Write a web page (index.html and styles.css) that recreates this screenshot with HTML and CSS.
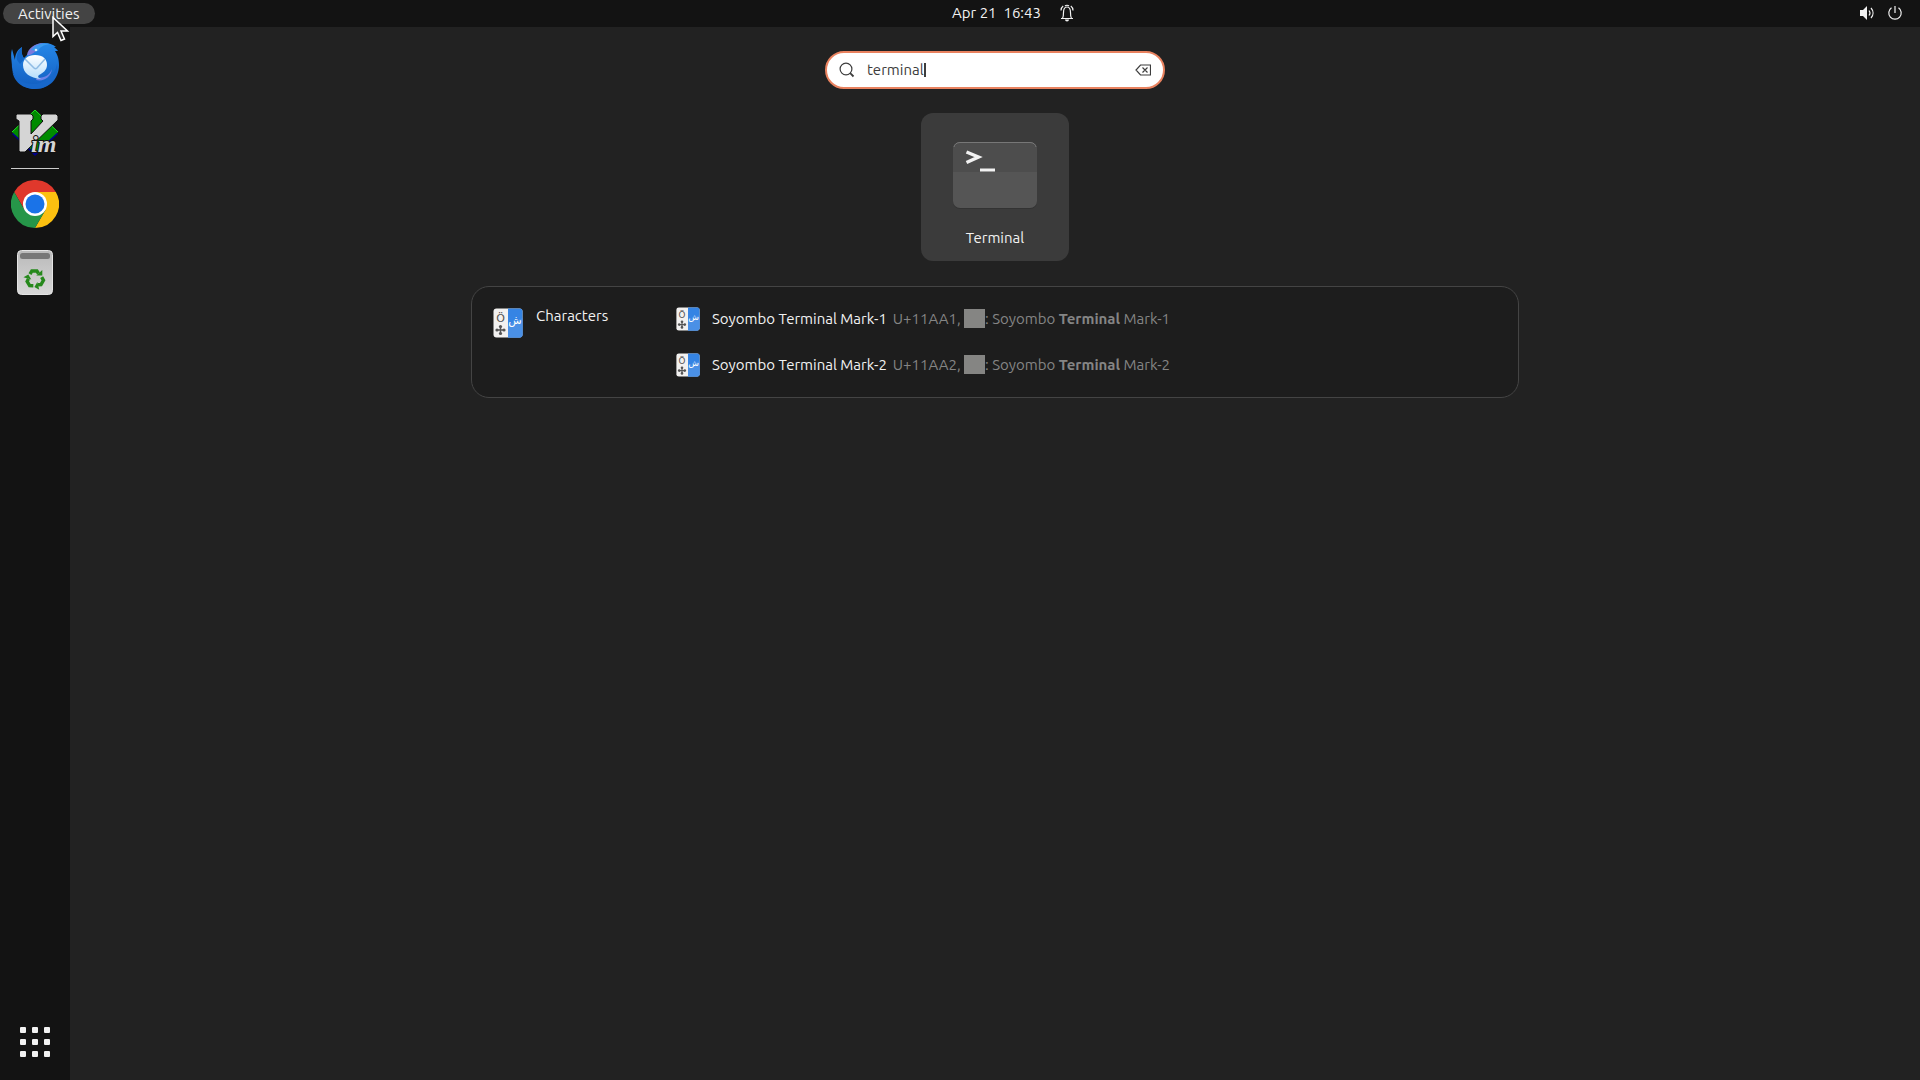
FILE: index.html
```html
<!DOCTYPE html>
<html lang="en">
<head>
  <meta charset="UTF-8">
  <meta name="viewport" content="width=device-width, initial-scale=1.0">
  <title>Activities</title>
  <link rel="stylesheet" href="styles.css">
</head>
<body>
  <header class="topbar">
    <button class="activities">Activities</button>
    <button class="clock">
      <span>Apr 21&nbsp; 16:43</span>
      <svg width="14" height="18" viewBox="0 0 14 18" fill="none" stroke="#f2f2f2" stroke-width="1.200">
        <path d="M1 14.500h12M2.500 14.500c1-1.500 1-3 1-6C3.500 5 4.500 3 7 3s3.500 2 3.500 5.500c0 3 0 4.500 1 6"/>
        <path d="M1 6.500c0-2 .8-3.500 2.200-4.500M13 6.500c0-2-.8-3.500-2.200-4.500M5 2c1-1 3-1 4 0"/>
        <path d="M5 15.500h4a2 2 0 0 1-4 0z" fill="#f2f2f2" stroke="none"/>
      </svg>
    </button>
    <button class="status" aria-label="System menu">
      <svg width="16" height="16" viewBox="0 0 16 16">
        <path d="M1 5h3l4-4v14l-4-4H1z" fill="#f2f2f2"/>
        <path d="M10 5.500c1.200 1.500 1.200 3.500 0 5M12 3c2.700 3 2.700 7 0 10" fill="none" stroke="#f2f2f2" stroke-width="1.200"/>
      </svg>
      <svg width="16" height="16" viewBox="0 0 16 16" fill="none" stroke="#f2f2f2" stroke-width="1.200">
        <path d="M4.500 2.800a6.200 6.200 0 1 0 7 0M8 1v7"/>
      </svg>
    </button>
  </header>

  <div class="desktop">
    <nav class="dock">
      <button class="app" aria-label="Thunderbird">
        <svg width="48" height="48" viewBox="0 0 48 48">
          <defs>
            <linearGradient id="bird" x1="0" y1="0" x2="0" y2="1"><stop offset="0" stop-color="#2587e8"/><stop offset="1" stop-color="#125ec0"/></linearGradient>
            <linearGradient id="mail" x1="0" y1="0" x2="0" y2="1"><stop offset="0" stop-color="#fff"/><stop offset="1" stop-color="#b5ddfb"/></linearGradient>
          </defs>
          <path d="M11 5C6 8 4 13 4 18L1 7c-2 7 0 12 0 18 1 12 10 22 23 22 15 0 24-11 24-24 0-7-2-11-4-14h3c-1-2-3-3-4-4h2C39 0 26-1 20 7l-4 6-3 3c-2-3-3-6-2-11z" fill="url(#bird)"/>
          <path d="M1 22v7c4 8 11 13 21 13 12 0 22-8 24-20 2 14-8 25-22 25C10 47 0 38 1 22z" fill="#1767ca"/>
          <path d="M11 5c-4 3-6 8-5 13l3 4 4-5c-2-3-3-7-2-12z" fill="#1265c6"/>
          <path d="M16 13c1-7 8-12 17-12-5 1-8 3-10 6l5 1c-5 1-7 6-12 5z" fill="#7c79dc"/>
          <path d="M20 8l4-4c4-2 9-3 15-2-7 1-10 3-12 7z" fill="#3b9bef"/>
          <circle cx="25" cy="8" r="1.300" fill="#d7edff"/>
          <path d="M26 36c9 0 13-4 15-9-1 8-8 13-16 11z" fill="#6d83e7"/>
          <path d="M24 13c8 0 12 4 12 10 0 5-4 8-8 10-2 2 0 3 2 4-11-1-18-6-18-14 0-6 5-10 12-10z" fill="url(#mail)"/>
          <path d="M14 17l9 9c1 1 2 1 3 0l8-9" fill="none" stroke="#90bce4" stroke-width="1.500"/>
        </svg>
      </button>
      <button class="app" aria-label="Vim">
        <svg width="48" height="48" viewBox="0 0 48 48">
          <path d="M24 2l23 22-23 22L1 24z" fill="#00008b"/>
          <path d="M24 0l23 22-23 21L1 22z" fill="#008b00"/>
          <path d="M1 22L24 0l23 22" fill="none" stroke="#20e020"/>
          <path d="M6 4h14l2 2v3l-2 2v13L32 11l-2-2V6l2-2h13l2 2v4L14 42H9l-1-1V11L5 9V5z" fill="#d5d5d5" stroke="#111" stroke-width="1"/>
          <text class="vim-text" x="20" y="42">im</text>
        </svg>
      </button>
      <hr>
      <button class="app" aria-label="Google Chrome">
        <svg width="48" height="48" viewBox="0 0 48 48">
          <path d="M24 24L13.600 30 3.200 12a24 24 0 0 1 41.600 0H24z" fill="#e0382c"/>
          <path d="M24 24V12h20.800A24 24 0 0 1 24 48l10.400-18z" fill="#fcc010"/>
          <path d="M24 24l10.400 6L24 48A24 24 0 0 1 3.200 12l10.400 18z" fill="#269649"/>
          <circle cx="24" cy="24" r="12" fill="#fff"/>
          <circle cx="24" cy="24" r="9.500" fill="#1a73e8"/>
        </svg>
      </button>
      <button class="app" aria-label="Trash">
        <svg width="48" height="48" viewBox="0 0 48 48">
          <defs><linearGradient id="bin" x1="0" y1="0" x2="0" y2="1"><stop offset="0" stop-color="#b9b9b9"/><stop offset="1" stop-color="#d8d8d8"/></linearGradient></defs>
          <rect x="6.500" y="2.500" width="35" height="44" rx="4" fill="url(#bin)" stroke="#e4e4e4"/>
          <rect x="9" y="5" width="30" height="6" rx="2.500" fill="#777"/>
          <g fill="none" stroke="#26891c" stroke-width="3.400">
            <g id="arrow"><path d="M19 26.200l1.900-3.200h5l1.600 2.500"/><path d="M25.300 27.500h6v-5.600z" fill="#26891c" stroke="none"/></g>
            <use href="#arrow" transform="rotate(120 24 31)"/>
            <use href="#arrow" transform="rotate(240 24 31)"/>
          </g>
        </svg>
      </button>
      <button class="app show-apps" aria-label="Show Applications">
        <svg width="30" height="30" viewBox="0 0 30 30" fill="#f2f2f2">
          <g id="dots"><rect width="6" height="6" rx="1"/><rect x="12" width="6" height="6" rx="1"/><rect x="24" width="6" height="6" rx="1"/></g>
          <use href="#dots" y="12"/>
          <use href="#dots" y="24"/>
        </svg>
      </button>
    </nav>

    <main class="overview">
      <label class="search">
        <svg width="16" height="16" viewBox="0 0 16 16" fill="none" stroke="#3d3d3d" stroke-width="1.200"><circle cx="7" cy="7" r="5.900"/><path d="M11.200 11.200l3.300 3.300" stroke-width="1.800"/></svg>
        <input class="search-text" type="text" value="terminal" aria-label="Search">
        <span class="caret"></span>
        <button class="clear" aria-label="Clear">
          <svg width="16" height="12" viewBox="0 0 16 12" fill="none" stroke="#3d3d3d" stroke-width="1.200"><path d="M5.500 1h10v10h-10L1 6zM7.500 3.500l5 5M12.500 3.500l-5 5"/></svg>
        </button>
      </label>

      <button class="result-app">
        <svg width="96" height="96" viewBox="0 0 96 96">
          <rect x="6" y="16" width="84" height="66" rx="7" fill="#333"/>
          <rect x="6" y="15" width="84" height="66" rx="7" fill="#555"/>
          <path d="M6 45V22a7 7 0 0 1 7-7h70a7 7 0 0 1 7 7v23z" fill="#4d4d4d"/>
          <path d="M7 20a6 5 0 0 1 6-4.500h70a6 5 0 0 1 6 4.500" fill="none" stroke="#777"/>
          <path d="M19.500 25l12 5-12 5.500" fill="none" stroke="#f2f2f2" stroke-width="3.400"/>
          <path d="M33 43h15" stroke="#f2f2f2" stroke-width="3"/>
        </svg>
        <span>Terminal</span>
      </button>

      <section class="provider">
        <button class="provider-name">
          <svg class="characters" width="30" height="30" viewBox="0 0 30 30">
            <rect x="0.500" y="0.500" width="29" height="29" rx="3" fill="#f2f1f0"/>
            <path d="M15 .5h11.500a3 3 0 0 1 3 3v23a3 3 0 0 1-3 3H15z" fill="#3584e4"/>
            <path d="M29.500 10v16.500a3 3 0 0 1-3 3H15V17z" fill="#4a90e6"/>
            <text x="7.500" y="14" text-anchor="middle" fill="#555">Ö</text>
            <text x="22" y="16" text-anchor="middle" fill="#fff">ش</text>
            <g id="quatrefoil"><path d="M7.500 18.500v7M4 22h7" stroke="#555" stroke-width="1.500"/><g fill="#555"><circle cx="7.500" cy="18.500" r="1.600"/><circle cx="7.500" cy="25.500" r="1.600"/><circle cx="4" cy="22" r="1.600"/><circle cx="11" cy="22" r="1.600"/></g></g>
          </svg>
          <span>Characters</span>
        </button>
        <div class="result-list">
          <button class="result">
            <svg class="characters" width="24" height="24" viewBox="0 0 30 30">
              <rect x="0.500" y="0.500" width="29" height="29" rx="3" fill="#f2f1f0"/>
              <path d="M15 .5h11.500a3 3 0 0 1 3 3v23a3 3 0 0 1-3 3H15z" fill="#3584e4"/>
              <path d="M29.500 10v16.500a3 3 0 0 1-3 3H15V17z" fill="#4a90e6"/>
              <text x="7.500" y="14" text-anchor="middle" fill="#555">Ö</text>
              <text x="22" y="16" text-anchor="middle" fill="#fff">ش</text>
              <use href="#quatrefoil"/>
            </svg>
            <span class="title">Soyombo Terminal Mark-1</span>
            <span class="detail">U+11AA1, <i class="glyph"></i>: Soyombo <b>Terminal</b> Mark-1</span>
          </button>
          <button class="result">
            <svg class="characters" width="24" height="24" viewBox="0 0 30 30">
              <rect x="0.500" y="0.500" width="29" height="29" rx="3" fill="#f2f1f0"/>
              <path d="M15 .5h11.500a3 3 0 0 1 3 3v23a3 3 0 0 1-3 3H15z" fill="#3584e4"/>
              <path d="M29.500 10v16.500a3 3 0 0 1-3 3H15V17z" fill="#4a90e6"/>
              <text x="7.500" y="14" text-anchor="middle" fill="#555">Ö</text>
              <text x="22" y="16" text-anchor="middle" fill="#fff">ش</text>
              <use href="#quatrefoil"/>
            </svg>
            <span class="title">Soyombo Terminal Mark-2</span>
            <span class="detail">U+11AA2, <i class="glyph"></i>: Soyombo <b>Terminal</b> Mark-2</span>
          </button>
        </div>
      </section>
    </main>
  </div>

  <svg class="pointer" width="18" height="27" viewBox="0 0 18 27"><path d="M1 1.500v19l4.500-4 3.500 8 3.500-1.500-3.500-8h6.500z" fill="#333" stroke="#fff" stroke-width="1.500"/></svg>
</body>
</html>
```

FILE: styles.css
```css
* { margin: 0; padding: 0; box-sizing: border-box; }
body {
  display: flex;
  flex-direction: column;
  min-height: 100vh;
  background: #222;
  color: #f2f2f2;
  font-family: Ubuntu, "Noto Sans", sans-serif;
  font-size: 15px;
  line-height: 20px;
}
button, input {
  font: inherit;
  color: inherit;
  background: none;
  border: none;
  outline: none;
}
svg {
  display: block;
  flex: none;
}
.topbar {
  display: grid;
  grid-template-columns: 1fr auto 1fr;
  align-items: center;
  height: 27px;
  padding: 0 17px 0 3px;
  background: #131313;
}
.activities {
  justify-self: start;
  height: 21px;
  padding: 0 15px;
  border-radius: 11px;
  background: #444;
}
.clock {
  display: flex;
  align-items: center;
  gap: 19px;
  padding: 0 0 2px 120px;
}
.status {
  display: flex;
  justify-self: end;
  gap: 12px;
  padding-bottom: 2px;
}
.desktop {
  display: flex;
  flex: 1;
}
.dock {
  display: flex;
  flex-direction: column;
  align-items: center;
  width: 70px;
  padding: 15px 11px 23px;
  background: #131313;
}
.app {
  margin-bottom: 20px;
}
.dock hr {
  width: 48px;
  height: 1px;
  margin: -10px 0 11px;
  border: none;
  background: #ccc;
}
.show-apps {
  margin: auto 0 0;
}
.vim-text {
  font: italic bold 24px "Liberation Serif", serif;
  fill: #d5d5d5;
  stroke: #111;
  stroke-width: 2px;
  paint-order: stroke;
}
.overview {
  display: flex;
  flex: 1;
  flex-direction: column;
  align-items: center;
  padding: 24px;
}
.search {
  display: flex;
  align-items: center;
  width: 340px;
  height: 38px;
  padding: 0 12px;
  border: 2px solid #e9825f;
  border-radius: 19px;
  background: #fff;
  color: #3d3d3d;
}
.search-text {
  field-sizing: content;
  margin-left: 12px;
}
.caret {
  width: 2px;
  height: 14px;
  background: #3d3d3d;
}
.clear {
  margin-left: auto;
}
.result-app {
  display: flex;
  flex-direction: column;
  align-items: center;
  gap: 5px;
  width: 148px;
  height: 148px;
  margin: 24px 0 25px;
  padding: 14px;
  border-radius: 12px;
  background: #3b3b3b;
}
.provider {
  display: flex;
  width: 100%;
  max-width: 1048px;
  min-height: 112px;
  padding: 20px 21px;
  border: 1px solid #444;
  border-radius: 18px;
  background: #1d1d1d;
}
.provider-name {
  display: flex;
  align-items: flex-start;
  gap: 13px;
  width: 183px;
}
.provider-name svg {
  margin-top: 1px;
}
.provider-name span {
  line-height: 18px;
}
.result-list {
  display: flex;
  flex-direction: column;
  gap: 22px;
}
.result {
  display: flex;
  align-items: center;
  height: 24px;
}
.title {
  margin-left: 12px;
}
.detail {
  margin-left: 6px;
  color: #858585;
}
.glyph {
  display: inline-block;
  width: 21px;
  height: 19px;
  vertical-align: -4px;
  background: #858583;
}
.characters text {
  font: 11px "DejaVu Sans", sans-serif;
}
.pointer {
  position: absolute;
  left: 52px;
  top: 16px;
}
```
